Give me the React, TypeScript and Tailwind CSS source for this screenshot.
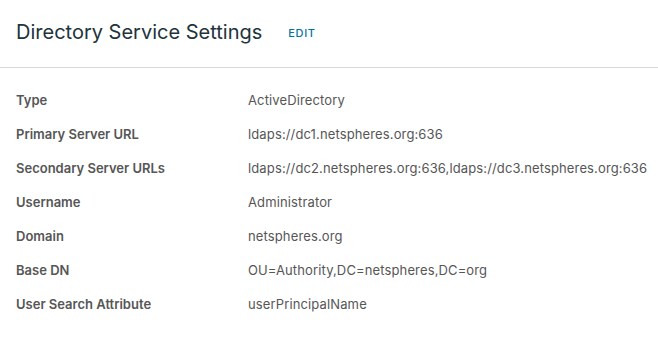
const rows: [string, string][] = [
  ['Type', 'ActiveDirectory'],
  ['Primary Server URL', 'ldaps://dc1.netspheres.org:636'],
  ['Secondary Server URLs', 'ldaps://dc2.netspheres.org:636,ldaps://dc3.netspheres.org:636'],
  ['Username', 'Administrator'],
  ['Domain', 'netspheres.org'],
  ['Base DN', 'OU=Authority,DC=netspheres,DC=org'],
  ['User Search Attribute', 'userPrincipalName'],
];

export default function App() {
  return (
    <div className="w-[658px] h-[338px] bg-white overflow-hidden font-['Inter',sans-serif]">
      <div className="flex items-center h-[68px] pl-4 pb-[3px] border-b border-[#d7d7d7]">
        <h3 className="text-[20px] text-[#21333b]">Directory Service Settings</h3>
        <button className="ml-[26px] mt-[2px] text-[11px] tracking-[0.06em] text-[#0072a3] font-medium">EDIT</button>
      </div>
      <div className="pt-[16px] pl-4">
        {rows.map(([label, value]) => (
          <div key={label} className="flex items-center h-[34px] text-[13px] text-[#565656]">
            <div className="w-[232px] font-semibold">{label}</div>
            <div className="tracking-[0.01em]">{value}</div>
          </div>
        ))}
      </div>
    </div>
  );
}
